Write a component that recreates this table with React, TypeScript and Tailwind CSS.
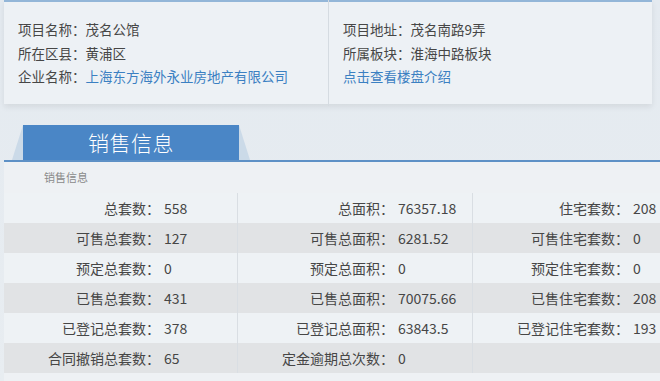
const rows: [string, string, string, string, string, string][] = [
  ['总套数：', '558', '总面积：', '76357.18', '住宅套数：', '208'],
  ['可售总套数：', '127', '可售总面积：', '6281.52', '可售住宅套数：', '0'],
  ['预定总套数：', '0', '预定总面积：', '0', '预定住宅套数：', '0'],
  ['已售总套数：', '431', '已售总面积：', '70075.66', '已售住宅套数：', '208'],
  ['已登记总套数：', '378', '已登记总面积：', '63843.5', '已登记住宅套数：', '193'],
  ['合同撤销总套数：', '65', '定金逾期总次数：', '0', '', ''],
]

const Cell = ({ label, value, last }: { label: string; value: string; last?: boolean }) => (
  <div className={`flex items-center h-full ${last ? '' : 'border-r border-[#d9dee3]'}`}>
    <div className="w-[156px] shrink-0 text-right">{label}</div>
    <div className="pl-[4px]">{value}</div>
  </div>
)

const App = () => (
  <div className="w-[660px] h-[381px] overflow-hidden bg-gradient-to-b from-[#e4eaf0] to-[#e8edf1] font-['Noto_Sans_CJK_SC','Noto_Sans',sans-serif] text-[14px] text-[#464646]">
    <div className="ml-[4px] mr-[8px] h-[104px] border-t-2 border-[#93b6d8] bg-[#edf1f5] shadow-[0_3px_6px_rgba(0,0,0,0.08)] grid grid-cols-[324px_1fr] text-[13.5px]">
      <div className="pl-[14px] pt-[16px] leading-[23.5px]">
        <div>项目名称：茂名公馆</div>
        <div>所在区县：黄浦区</div>
        <div>
          企业名称：<span className="text-[#3b80c2]">上海东方海外永业房地产有限公司</span>
        </div>
      </div>
      <div className="border-l border-[#d5dbe1] my-[-2px] pl-[14px] pt-[18px] leading-[23.5px]">
        <div>项目地址：茂名南路9弄</div>
        <div>所属板块：淮海中路板块</div>
        <div className="text-[#3b80c2]">点击查看楼盘介绍</div>
      </div>
    </div>

    <div className="mt-[21px] h-[35px] flex">
      <div className="ml-[12px] w-[238px] h-full bg-[#cbdae8] [clip-path:polygon(11px_0,227px_0,100%_100%,0_100%)] flex">
        <div className="mx-[11px] flex-1 bg-[#4a86c6] flex items-center justify-center text-white text-[21px] font-light tracking-[0.5px]">
          销售信息
        </div>
      </div>
    </div>

    <div className="ml-[4px] border-t-2 border-[#5e91c6] bg-[#eef1f4]">
      <div className="h-[31px] pl-[40px] flex items-center text-[11px] text-[#8a8a8a]">销售信息</div>
      <div>
        {rows.map((r, i) => (
          <div
            key={i}
            className={`h-[30px] grid grid-cols-[234px_235px_1fr] ${i % 2 === 0 ? 'bg-[#eef2f5]' : 'bg-[#e1e3e5]'}`}
          >
            <Cell label={r[0]} value={r[1]} />
            <Cell label={r[2]} value={r[3]} />
            <Cell label={r[4]} value={r[5]} last />
          </div>
        ))}
      </div>
      <div className="h-[10px]" />
    </div>
  </div>
)

export default App
